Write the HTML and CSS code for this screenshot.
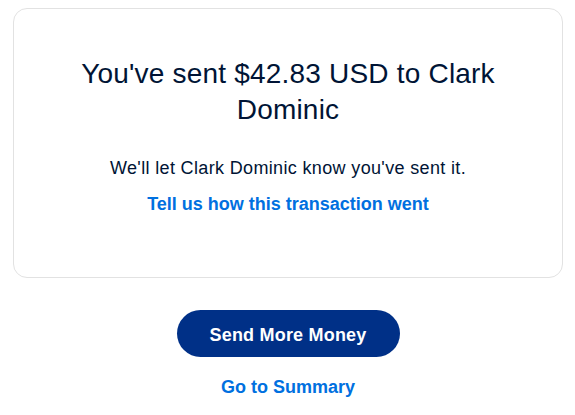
FILE: index.html
```html
<!DOCTYPE html>
<html lang="en">
<head>
<meta charset="utf-8">
<title>Sent</title>
<link rel="stylesheet" href="styles.css">
</head>
<body>
<main class="page">
  <section class="card">
    <h1 class="title">You've sent $42.83 USD to Clark Dominic</h1>
    <p class="note">We'll let Clark Dominic know you've sent it.</p>
    <a class="link feedback" href="#">Tell us how this transaction went</a>
  </section>
  <div class="actions">
    <a class="btn" href="#">Send More Money</a>
    <a class="link summary" href="#">Go to Summary</a>
  </div>
</main>
</body>
</html>
```
FILE: styles.css
```css
* { box-sizing: border-box; }
html, body { margin: 0; background: #fff; }
body {
  font-family: "Liberation Sans", Arial, sans-serif;
  color: #001435;
}
.page {
  padding: 8px 12px 0 13px;
}
.card {
  border: 1px solid #e2e2e2;
  border-radius: 14px;
  height: 270px;
  padding: 47px 60px 0;
  display: flex;
  flex-direction: column;
  align-items: center;
  text-align: center;
}
.title {
  margin: 0;
  font-size: 28px;
  font-weight: 400;
  line-height: 36px;
  letter-spacing: 0.2px;
  color: #001435;
}
.note {
  margin: 28px 0 0;
  font-size: 18px;
  line-height: 24px;
  letter-spacing: 0.35px;
  color: #001435;
}
.link {
  color: #0070e0;
  font-weight: 700;
  text-decoration: none;
}
.feedback {
  margin-top: 12px;
  font-size: 18px;
  line-height: 24px;
}
.actions {
  display: flex;
  flex-direction: column;
  align-items: center;
  padding-top: 32px;
}
.btn {
  display: flex;
  align-items: center;
  justify-content: center;
  width: 223px;
  height: 47px;
  padding-top: 3px;
  border-radius: 24px;
  background: #003087;
  color: #fff;
  font-size: 18px;
  font-weight: 700;
  letter-spacing: 0.2px;
  text-decoration: none;
}
.summary {
  margin-top: 18px;
  font-size: 18px;
  line-height: 24px;
}
```
